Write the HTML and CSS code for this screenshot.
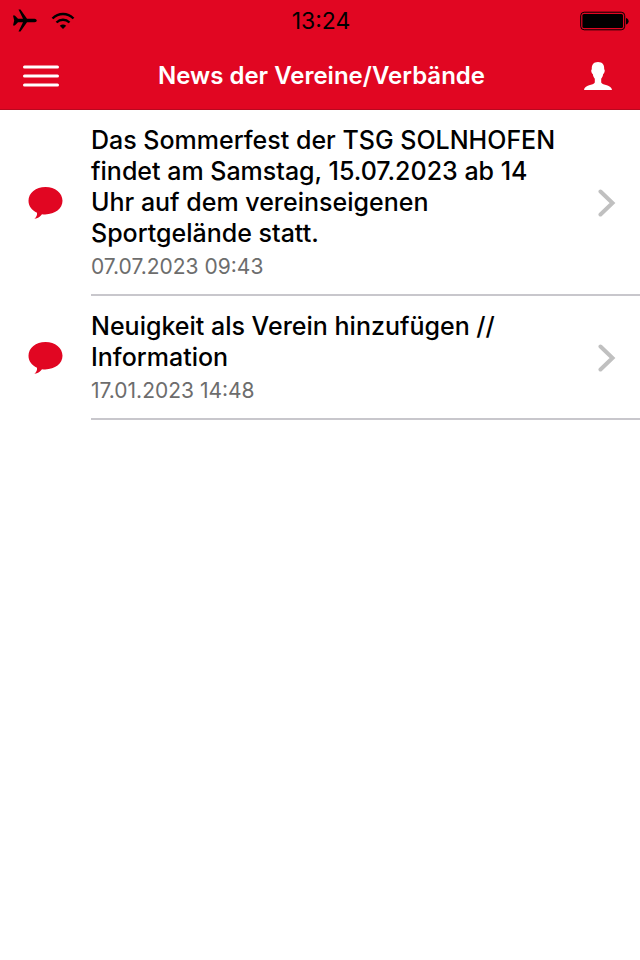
FILE: index.html
```html
<!DOCTYPE html>
<html lang="de">
<head>
    <meta charset="UTF-8">
    <meta name="viewport" content="width=device-width, initial-scale=1.0">
    <title>News der Vereine/Verbände</title>
    <link rel="stylesheet" href="styles.css">
</head>
<body>
    <header class="header">
        <div class="status-bar">
            <div class="status-icons">
                <svg width="24" height="24" viewBox="0 0 24 24" aria-hidden="true">
                    <path d="M0 6.500h1.800l3.200 3.200h5L5.500 0.500h2L14 9.700h7.500c3 0.300 3 3.300 0 3.600H14L7.500 22.500h-2L10 13.300H5l-3.200 3.200H0l1.200-5z"/>
                </svg>
                <svg width="24" height="18" viewBox="0 0 24 18" aria-hidden="true">
                    <path d="M1.500 6.500c6-6 15-6 21 0M5.500 10.500c3.800-3.700 9.200-3.700 13 0" fill="none" stroke="#000" stroke-width="2.400"/>
                    <path d="M12 17l-3.200-3.200c2-1.800 4.400-1.800 6.400 0z"/>
                </svg>
            </div>
            <time class="clock">13:24</time>
            <svg class="battery" width="49" height="20" viewBox="0 0 49 20" aria-hidden="true">
                <rect x="0.700" y="1.200" width="44" height="17.600" rx="3.500" fill="none" stroke="#000" stroke-width="1"/>
                <rect x="2.400" y="3" width="40.600" height="14" rx="1.500"/>
                <path d="M46 7c3.500 0.500 3.500 6 0 6.500z"/>
            </svg>
        </div>
        <div class="nav-bar">
            <button type="button" class="icon-button" aria-label="Menü">
                <svg width="36" height="22" viewBox="0 0 36 22">
                    <path d="M1.500 2h33M1.500 11h33M1.500 20h33" stroke="#fff" stroke-width="3" stroke-linecap="round"/>
                </svg>
            </button>
            <h1>News der Vereine/Verbände</h1>
            <button type="button" class="icon-button" aria-label="Profil">
                <svg width="28" height="28" viewBox="0 0 28 28">
                    <path d="M14 0c-4.500 0-6.500 2.800-6.200 7.200-1.200 0.800-0.200 4.200 1 4.800 0.300 2.400 1 3.500 2 4.800v3.700C9.500 23.500 0.500 22.500 0 28h28c-0.500-5.500-9.500-4.500-10.800-7.500v-3.700c1-1.300 1.700-2.400 2-4.800 1.200-0.600 2.200-4 1-4.800C20.500 2.800 18.500 0 14 0z" fill="#fff"/>
                </svg>
            </button>
        </div>
    </header>

    <main class="news-list">
        <a href="#" class="news-item">
            <svg class="bubble" width="35" height="32" viewBox="0 0 35 32" aria-hidden="true">
                <path d="M17.500 0C7.800 0 0.500 6 0.500 13.800c0 5.200 3.200 9.500 8.500 11.900 0.300 2.300-0.500 4.300-2.600 6.100 3.700-0.600 6-2.300 7.600-4.600 11.500 1.300 20.500-4.700 20.500-13.400C34.500 6 27.200 0 17.500 0z"/>
            </svg>
            <div class="news-content">
                <div class="news-text">
                    <h2>Das Sommerfest der TSG SOLNHOFEN findet am Samstag, 15.07.2023 ab 14 Uhr auf dem vereinseigenen Sportgelände statt.</h2>
                    <time>07.07.2023 09:43</time>
                </div>
                <svg class="chevron" width="18" height="28" viewBox="0 0 18 28" aria-hidden="true">
                    <path d="M2.500 2.500L14.500 14l-12 11.500"/>
                </svg>
            </div>
        </a>
        <a href="#" class="news-item">
            <svg class="bubble" width="35" height="32" viewBox="0 0 35 32" aria-hidden="true">
                <path d="M17.500 0C7.800 0 0.500 6 0.500 13.800c0 5.200 3.200 9.500 8.500 11.900 0.300 2.300-0.500 4.300-2.600 6.100 3.700-0.600 6-2.300 7.600-4.600 11.500 1.300 20.500-4.700 20.500-13.400C34.500 6 27.200 0 17.500 0z"/>
            </svg>
            <div class="news-content">
                <div class="news-text">
                    <h2>Neuigkeit als Verein hinzufügen // Information</h2>
                    <time>17.01.2023 14:48</time>
                </div>
                <svg class="chevron" width="18" height="28" viewBox="0 0 18 28" aria-hidden="true">
                    <path d="M2.500 2.500L14.500 14l-12 11.500"/>
                </svg>
            </div>
        </a>
    </main>
</body>
</html>
```

FILE: styles.css
```css
* {
    box-sizing: border-box;
}
body {
    margin: 0;
    background-color: #fff;
    font-family: Inter, sans-serif;
    color: #000;
}
.header {
    background-color: #e10622;
    border-bottom: 1px solid #b8081f;
}
.status-bar {
    display: grid;
    grid-template-columns: 1fr auto 1fr;
    align-items: center;
    height: 41px;
    padding: 0 11px 0 13px;
}
.status-icons {
    display: flex;
    align-items: center;
    gap: 14px;
}
.clock {
    font-size: 23px;
    line-height: 28px;
}
.battery {
    justify-self: end;
}
.nav-bar {
    display: flex;
    align-items: center;
    justify-content: space-between;
    height: 68px;
    padding: 2px 28px 0 23px;
}
.nav-bar h1 {
    margin: 0;
    font-size: 24px;
    line-height: 32px;
    font-weight: 600;
    color: #fff;
}
.icon-button {
    display: flex;
    padding: 0;
    border: none;
    background: none;
    cursor: pointer;
}
.news-item {
    display: flex;
    align-items: center;
    gap: 28px;
    padding-left: 28px;
    color: #000;
    text-decoration: none;
}
.bubble {
    flex: none;
    fill: #e10622;
}
.news-content {
    flex: 1;
    display: flex;
    align-items: center;
    gap: 24px;
    padding: 15px 24px 13px 0;
    border-bottom: 2px solid #c8c7cc;
}
.news-text {
    flex: 1;
}
.news-text h2 {
    margin: 0;
    font-size: 25px;
    line-height: 31px;
    font-weight: 500;
}
.news-text time {
    display: block;
    margin-top: 4px;
    font-size: 21px;
    line-height: 28px;
    color: #6d6d6d;
}
.chevron {
    flex: none;
    fill: none;
    stroke: #c0c0c0;
    stroke-width: 4;
    stroke-linecap: round;
}
```
